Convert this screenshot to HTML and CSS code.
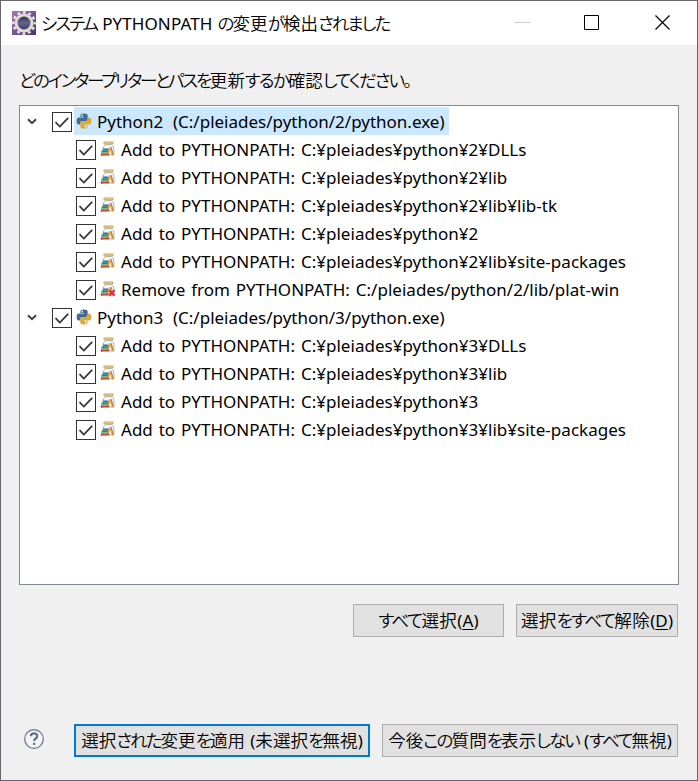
FILE: index.html
```
<!DOCTYPE html>
<html lang="ja">
<head>
<meta charset="utf-8">
<title>システム PYTHONPATH の変更が検出されました</title>
<link rel="stylesheet" href="styles.css">
</head>
<body>
<svg class="defs" width="0" height="0">
  <symbol id="check" viewBox="0 0 20 20"><rect x=".5" y=".5" width="19" height="19" fill="#fff" stroke="#333"/><path d="M3.5 10.2l4.3 4.3L16.2 5.8" fill="none" stroke="#333" stroke-width="1.7"/></symbol>
  <symbol id="chevron" viewBox="0 0 10 7"><path d="M1 1.2l4 4 4-4" fill="none" stroke="#404040" stroke-width="2"/></symbol>
  <symbol id="python" viewBox="0 0 16 16">
    <path d="M4.3 4V2.600Q4.300.6 8 .6t3.700 2v3.600q0 1.800-1.900 1.800H6.400Q4.400 8 4.400 10v1.600H3Q.6 11.600.6 8T3 4.400h5V4z" fill="#426b94"/>
    <path d="M11.700 12v1.400q0 2-3.700 2t-3.700-2V9.800Q4.300 8 6.200 8h3.400q2 0 2-2V4.400H13q2.400 0 2.400 3.600T13 11.600H8v.4z" fill="#dda83b"/>
    <circle cx="6.200" cy="2.600" r=".9" fill="#fff"/><circle cx="9.800" cy="13.400" r=".9" fill="#fff"/>
  </symbol>
  <symbol id="jar" viewBox="0 0 16 16">
    <path d="M5.500 3.500Q2.500 5.500 3 8v6h9.500q1.500 0 1.500-2V8q0-3-3-4.500z" fill="#edf5fd" stroke="#a6b9d3"/>
    <path d="M4 1h9v1.800H4z" fill="#f8e5b4" stroke="#d0a045"/>
    <path d="M9.500 6h2l2.500 8.500h-2.200L10.300 9 8.500 14h-2z" fill="#edaa32"/><path d="M11 6.500l2.500 7.500" stroke="#c67d20"/>
    <path d="M3 7.500h5.500v2H3z" fill="#52697c"/><path d="M1.500 9.500h6.500V12H1.500z" fill="#208b75"/>
    <path d="M.8 12.200h8.400V15H.8z" fill="#b95532"/><path d="M2 11.700h6M2 14.600h7" stroke="#e5dcc7" stroke-width=".6"/>
  </symbol>
  <symbol id="jar-remove" viewBox="0 0 16 16"><use href="#jar" width="16" height="16"/><path d="M9 9l5.500 5.500M14.500 9L9 14.500" stroke="#f6b2b4" stroke-width="3.200"/><path d="M9.200 9.200l5.300 5.300M14.500 9.200l-5.300 5.300" stroke="#d92f36" stroke-width="2.200"/></symbol>
</svg>
<div class="window">
  <header class="titlebar">
    <svg class="app-icon" viewBox="0 0 24 24"><defs><linearGradient id="app" x2="1" y2="1"><stop stop-color="#a17bb0"/><stop offset="1" stop-color="#4b326d"/></linearGradient><linearGradient id="core" x2="0" y2="1"><stop stop-color="#25243e"/><stop offset=".5" stop-color="#65678f"/><stop offset="1" stop-color="#343152"/></linearGradient></defs><path d="M0 0h24v24H0z" fill="url(#app)"/><circle cx="12" cy="12" r="10.600" fill="none" stroke="#e8e5df" stroke-width="2.600" stroke-dasharray="2.800 2.750" stroke-dashoffset="1.400"/><circle cx="12" cy="12" r="8" fill="url(#core)" stroke="#dedbd4" stroke-width="3"/></svg>
    <h1><span class="t ja"><i>システム</i><b> PYTHONPATH </b><i>の</i>変更<i>が</i>検出<i>されました</i></span></h1>
    <svg class="controls" viewBox="0 0 156 16"><path d="M0 7.500h15" stroke="#ccc"/><path d="M69.500.5h14v14h-14z" fill="none" stroke="#000"/><path d="M140.500.5l14 14M154.500.5l-14 14" stroke="#000" stroke-width="1.200"/></svg>
  </header>
  <p class="message"><span class="t ja"><i class="lead">どのインタープリターとパスを</i>更新<i>するか</i>確認<i>してください。</i></span></p>
  <ul class="tree">
    <li class="row root"><svg class="chevron"><use href="#chevron"/></svg><svg class="box"><use href="#check"/></svg><span class="label selected"><svg class="icon"><use href="#python"/></svg><span class="t">Python2  (C:/pleiades/python/2/python.exe)</span></span></li>
    <li class="row"><svg class="box"><use href="#check"/></svg><span class="label"><svg class="icon"><use href="#jar"/></svg><span class="t path">Add to PYTHONPATH: C:¥pleiades¥python¥2¥DLLs</span></span></li>
    <li class="row"><svg class="box"><use href="#check"/></svg><span class="label"><svg class="icon"><use href="#jar"/></svg><span class="t path">Add to PYTHONPATH: C:¥pleiades¥python¥2¥lib</span></span></li>
    <li class="row"><svg class="box"><use href="#check"/></svg><span class="label"><svg class="icon"><use href="#jar"/></svg><span class="t path">Add to PYTHONPATH: C:¥pleiades¥python¥2¥lib¥lib-tk</span></span></li>
    <li class="row"><svg class="box"><use href="#check"/></svg><span class="label"><svg class="icon"><use href="#jar"/></svg><span class="t path">Add to PYTHONPATH: C:¥pleiades¥python¥2</span></span></li>
    <li class="row"><svg class="box"><use href="#check"/></svg><span class="label"><svg class="icon"><use href="#jar"/></svg><span class="t path">Add to PYTHONPATH: C:¥pleiades¥python¥2¥lib¥site-packages</span></span></li>
    <li class="row"><svg class="box"><use href="#check"/></svg><span class="label"><svg class="icon"><use href="#jar-remove"/></svg><span class="t path">Remove from PYTHONPATH: C:/pleiades/python/2/lib/plat-win</span></span></li>
    <li class="row root"><svg class="chevron"><use href="#chevron"/></svg><svg class="box"><use href="#check"/></svg><span class="label"><svg class="icon"><use href="#python"/></svg><span class="t">Python3  (C:/pleiades/python/3/python.exe)</span></span></li>
    <li class="row"><svg class="box"><use href="#check"/></svg><span class="label"><svg class="icon"><use href="#jar"/></svg><span class="t path">Add to PYTHONPATH: C:¥pleiades¥python¥3¥DLLs</span></span></li>
    <li class="row"><svg class="box"><use href="#check"/></svg><span class="label"><svg class="icon"><use href="#jar"/></svg><span class="t path">Add to PYTHONPATH: C:¥pleiades¥python¥3¥lib</span></span></li>
    <li class="row"><svg class="box"><use href="#check"/></svg><span class="label"><svg class="icon"><use href="#jar"/></svg><span class="t path">Add to PYTHONPATH: C:¥pleiades¥python¥3</span></span></li>
    <li class="row"><svg class="box"><use href="#check"/></svg><span class="label"><svg class="icon"><use href="#jar"/></svg><span class="t path">Add to PYTHONPATH: C:¥pleiades¥python¥3¥lib¥site-packages</span></span></li>
  </ul>
  <div class="selection-actions"><button class="select-all"><span class="t ja"><i>すべて</i>選択<b>(<u>A</u>)</b></span></button><button class="deselect-all"><span class="t ja">選択<i>をすべて</i>解除<b>(<u>D</u>)</b></span></button></div>
  <footer>
    <svg class="help" viewBox="0 0 20 20"><circle cx="10" cy="10" r="9.300" fill="#f4f4f4" stroke="#62718c" stroke-width="1.200"/><path d="M6.800 7.300Q7 4.300 10 4.300t3.200 2.700q0 1.500-1.500 2.500T10.200 12" fill="none" stroke="#62718c" stroke-width="2.200"/><path d="M9 13.700h2.300v2.200H9z" fill="#62718c"/></svg>
    <button class="apply"><span class="t ja">選択<i>された</i>変更<i>を</i>適用<b> (</b>未選択<i>を</i>無視<b>)</b></span></button><button class="ignore"><span class="t ja">今後<i>この</i>質問<i>を</i>表示<i>しない</i><b> (</b><i>すべて</i>無視<b>)</b></span></button>
  </footer>
</div>
</body>
</html>
```
FILE: styles.css
```
* { box-sizing: border-box; }
body { margin: 0; font: 17px/28px "Noto Sans", "Noto Sans CJK JP", sans-serif; color: #000; background: #f0f0f0; }
.defs { position: absolute; }
.window { width: 698px; height: 781px; border: 1px solid #69666b; background: #f0f0f0; display: flex; flex-direction: column; overflow: hidden; }
.t { white-space: pre; font-feature-settings: "palt"; word-spacing: .5px; }
.path { word-spacing: 1.4px; letter-spacing: .02px; }
.ja { font-size: 17.5px; font-weight: 350; letter-spacing: .1px; }
.ja i { font-style: normal; letter-spacing: -1.9px; }
.ja .lead { letter-spacing: -2.25px; }
.ja b { font-weight: 400; font-size: 17px; letter-spacing: .1px; }
.titlebar { height: 44px; background: #fff; display: flex; align-items: center; padding: 0 26px 0 11px; }
.app-icon { width: 24px; height: 24px; }
h1 { margin: 0 0 0 5px; font-size: 17px; font-weight: 400; }
.controls { width: 156px; height: 16px; margin-left: auto; }
.message { margin: 20px 18px 0; height: 40px; line-height: 30px; }
.tree { list-style: none; margin: 0 18px; padding: 1px 0 0; height: 480px; border: 1px solid #828790; background: #fff; }
.row { height: 28px; line-height: 30px; display: flex; align-items: flex-start; padding-left: 56px; }
.row.root { padding-left: 7px; }
.chevron { width: 10px; height: 7px; margin: 11px 15px 0 0; }
.box { width: 20px; height: 20px; margin: 5px 2px 0 0; }
.label { display: flex; height: 28px; padding: 0 4px 0 2px; }
.selected { background: #cce8ff; }
.icon { width: 16px; height: 16px; margin: 6px 5px 0 0; }
.selection-actions { display: flex; justify-content: flex-end; gap: 12px; margin: 19px 19px 0 0; }
button { height: 33px; padding: 0; border: 1px solid #adadad; background: #e1e1e1; font: inherit; color: #000; }
u { text-underline-offset: 2px; text-decoration-thickness: 1px; }
.select-all { width: 151px; }
.select-all .t, .deselect-all .t { letter-spacing: .4px; }
.select-all i, .deselect-all i { letter-spacing: -1.6px; }
.deselect-all { width: 162px; }
footer { display: flex; align-items: center; margin: 87px 19px 0 23px; }
.help { width: 20px; height: 20px; margin: 0 30px 4px 0; }
.apply { width: 296px; border: 2px solid #0078d7; margin-right: 12px; }
.ignore { width: 296px; }
```
